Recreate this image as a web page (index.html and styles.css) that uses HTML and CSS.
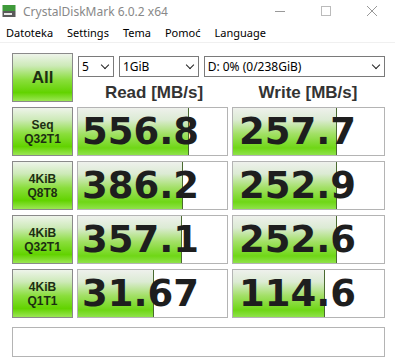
FILE: index.html
```html
<!DOCTYPE html>
<html lang="pl">
<head>
    <meta charset="UTF-8">
    <title>CrystalDiskMark 6.0.2 x64</title>
    <link rel="stylesheet" href="styles.css">
</head>
<body>
<div class="window">
    <div class="titlebar">
        <svg class="app-icon" width="14" height="14" viewBox="0 0 14 14">
            <rect x="0.5" y="1" width="13" height="6" fill="#3f9a3a"/>
            <rect x="0.5" y="7" width="13" height="6" fill="#5a5a5a"/>
            <rect x="2" y="9" width="8" height="2" fill="#e8e8e8"/>
        </svg>
        <span class="title">CrystalDiskMark 6.0.2 x64</span>
        <div class="controls">
            <svg width="46" height="22" viewBox="0 0 46 22"><line x1="18" y1="11.5" x2="28" y2="11.5" stroke="#999" stroke-width="1"/></svg>
            <svg width="46" height="22" viewBox="0 0 46 22"><rect x="18.5" y="6.5" width="9" height="9" fill="none" stroke="#bbb" stroke-width="1"/></svg>
            <svg width="46" height="22" viewBox="0 0 46 22"><path d="M18 6 L28 16 M28 6 L18 16" stroke="#999" stroke-width="1"/></svg>
        </div>
    </div>
    <div class="menubar">
        <span>Datoteka</span>
        <span>Settings</span>
        <span>Tema</span>
        <span>Pomoć</span>
        <span>Language</span>
    </div>

    <div class="main">
        <div class="btn all">All</div>
        <div class="head">
            <div class="selects">
                <div class="select s-count">5<span class="chev"></span></div>
                <div class="select s-size">1GiB<span class="chev"></span></div>
                <div class="select s-drive">D: 0% (0/238GiB)<span class="chev"></span></div>
            </div>
            <div class="titles">
                <div>Read [MB/s]</div>
                <div>Write [MB/s]</div>
            </div>
        </div>

        <div class="btn label">Seq<br>Q32T1</div>
        <div class="cell"><div class="bar" style="width: 74%;"></div><span class="val">556.8</span></div>
        <div class="cell write"><div class="bar" style="width: 68%;"></div><span class="val">257.7</span></div>

        <div class="btn label">4KiB<br>Q8T8</div>
        <div class="cell"><div class="bar" style="width: 70%;"></div><span class="val">386.2</span></div>
        <div class="cell write"><div class="bar" style="width: 68%;"></div><span class="val">252.9</span></div>

        <div class="btn label">4KiB<br>Q32T1</div>
        <div class="cell"><div class="bar" style="width: 69%;"></div><span class="val">357.1</span></div>
        <div class="cell write"><div class="bar" style="width: 68%;"></div><span class="val">252.6</span></div>

        <div class="btn label">4KiB<br>Q1T1</div>
        <div class="cell"><div class="bar" style="width: 50%;"></div><span class="val">31.67</span></div>
        <div class="cell write"><div class="bar" style="width: 60%;"></div><span class="val">114.6</span></div>

        <div class="comment"></div>
    </div>
</div>
</body>
</html>
```

FILE: styles.css
```css
body {
    margin: 0;
    padding: 0;
    background-color: #fff;
    font-family: "Segoe UI", "Noto Sans", sans-serif;
    color: #000;
}

.window {
    width: 395px;
    height: 360px;
    background: #fff;
    overflow: hidden;
}

.titlebar {
    height: 22px;
    display: flex;
    align-items: center;
}

.app-icon {
    margin-left: 2px;
    margin-right: 7px;
}

.title {
    font-size: 12px;
    color: #888;
}

.controls {
    margin-left: auto;
    display: flex;
}

.menubar {
    height: 20px;
    display: flex;
    align-items: center;
    gap: 14px;
    padding-left: 6px;
    font-size: 11px;
    border-bottom: 1px solid #f0f0f0;
}

.main {
    display: grid;
    grid-template-columns: 61px 151px 153px;
    grid-auto-rows: 49px;
    column-gap: 4px;
    row-gap: 5px;
    padding: 10px 0 0 12px;
}

.btn {
    box-sizing: border-box;
    border: 1px solid #8a8a8a;
    background: linear-gradient(#eef4ea 0%, #cdeab8 25%, #8ade3c 55%, #62d300 82%, #9be654 100%);
    display: flex;
    align-items: center;
    justify-content: center;
    text-align: center;
    font-family: "Liberation Sans", Arial, sans-serif;
    font-weight: bold;
    color: #1c2e12;
}

.all {
    font-size: 17px;
}

.label {
    font-size: 12px;
    line-height: 14px;
}

.head {
    grid-column: 2 / 4;
    display: flex;
    flex-direction: column;
}

.selects {
    display: flex;
    gap: 5px;
    margin-top: 3px;
    padding-left: 1px;
}

.select {
    box-sizing: border-box;
    height: 21px;
    border: 1px solid #7a7a7a;
    background: #fff;
    font-size: 12px;
    line-height: 19px;
    padding-left: 3px;
    position: relative;
}

.s-count { width: 36px; }
.s-size { width: 80px; }
.s-drive { width: 182px; }

.chev {
    position: absolute;
    right: 5px;
    top: 5px;
    width: 5px;
    height: 5px;
    border-right: 1.5px solid #222;
    border-bottom: 1.5px solid #222;
    transform: rotate(45deg);
}

.titles {
    display: flex;
    margin-top: 6px;
    font-family: "Liberation Sans", Arial, sans-serif;
    font-weight: bold;
    font-size: 17px;
    color: #333;
}

.titles div {
    flex: 1;
    text-align: center;
}

.cell {
    box-sizing: border-box;
    border: 1px solid #b4b4b4;
    background: #fff;
    position: relative;
    display: flex;
    align-items: center;
    padding-left: 4px;
}

.cell.write {
    padding-left: 6px;
}

.bar {
    position: absolute;
    top: 0;
    left: 0;
    bottom: 0;
    background: linear-gradient(#eef1ec 0%, #dcebd4 25%, #a2e065 55%, #6fd716 85%, #8fe24a 100%);
    border-right: 1px solid #4a6a30;
}

.val {
    position: relative;
    font-family: "DejaVu Sans", Verdana, sans-serif;
    font-weight: bold;
    font-size: 37px;
    color: #1e1e1e;
}

.comment {
    grid-column: 1 / 4;
    height: 30px;
    box-sizing: border-box;
    border: 1px solid #b4b4b4;
    margin-top: 4px;
}
```
